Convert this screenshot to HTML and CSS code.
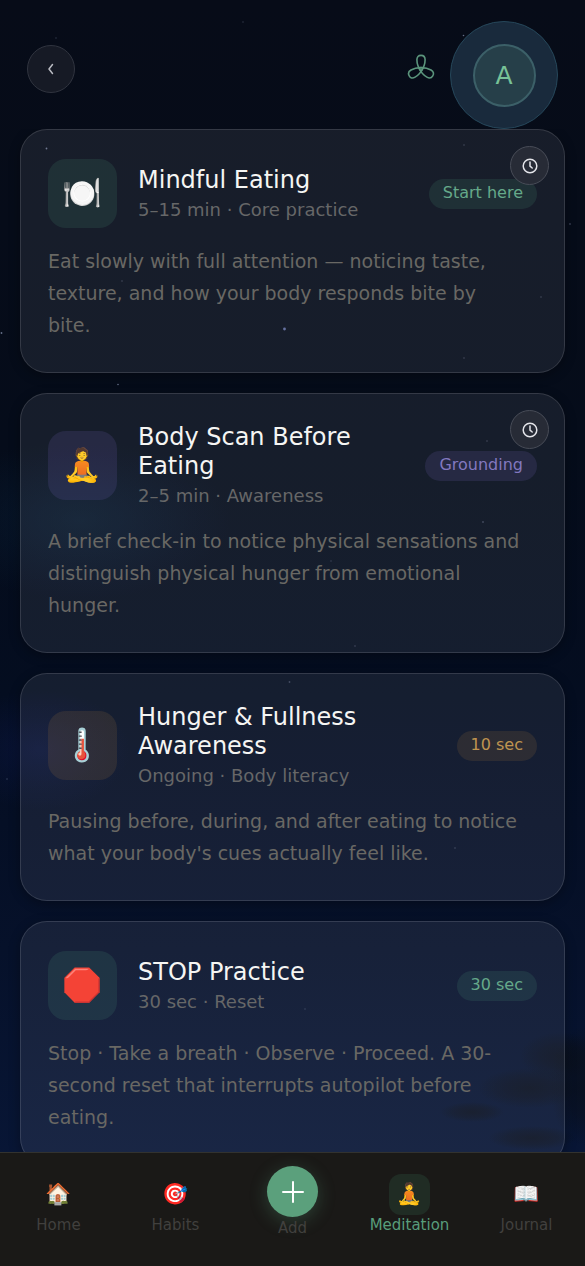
FILE: index.html
```html
<!DOCTYPE html>
<html lang="en">
<head>
<meta charset="utf-8">
<meta name="viewport" content="width=device-width, initial-scale=1">
<title>Mindful eating practices</title>
<link rel="stylesheet" href="styles.css">
</head>
<body>
<div class="app">
  <svg class="sky" viewBox="0 0 585 1266" preserveAspectRatio="xMidYMid slice" aria-hidden="true">
    <defs>
      <radialGradient id="teal"><stop offset="0" stop-color="#0c2a45" stop-opacity=".4"/><stop offset="1" stop-color="#0c2a45" stop-opacity="0"/></radialGradient>
      <radialGradient id="indigo"><stop offset="0" stop-color="#101c5a" stop-opacity=".35"/><stop offset="1" stop-color="#101c5a" stop-opacity="0"/></radialGradient>
      <radialGradient id="cloud"><stop offset="0" stop-color="#090f1a" stop-opacity=".75"/><stop offset=".5" stop-color="#090f1a" stop-opacity=".5"/><stop offset="1" stop-color="#090f1a" stop-opacity="0"/></radialGradient>
    </defs>
    <ellipse cx="80" cy="520" rx="150" ry="80" fill="url(#teal)"/>
    <ellipse cx="40" cy="750" rx="90" ry="60" fill="url(#indigo)"/>
    <g fill="url(#cloud)">
      <ellipse cx="560" cy="1056" rx="40" ry="24"/>
      <ellipse cx="530" cy="1088" rx="52" ry="20"/>
      <ellipse cx="584" cy="1086" rx="34" ry="60"/>
      <ellipse cx="472" cy="1112" rx="32" ry="10"/>
      <ellipse cx="532" cy="1138" rx="44" ry="12"/>
    </g>
    <g fill="#8f9ab8" opacity=".7">
      <circle cx="284.500" cy="329" r="1.400" fill="#7f8ed0"/>
      <circle cx="46.500" cy="148.500" r=".9"/><circle cx="1.500" cy="333" r=".9"/>
      <circle cx="118" cy="384.500" r=".8"/><circle cx="463.500" cy="35.500" r=".8"/>
      <g opacity=".5">
        <circle cx="464" cy="145" r=".8"/><circle cx="570" cy="224" r=".9"/><circle cx="541" cy="297" r=".8"/>
        <circle cx="464" cy="358" r=".8"/><circle cx="122" cy="281" r=".8"/><circle cx="243" cy="22" r=".7"/>
        <circle cx="487" cy="441" r=".8"/><circle cx="483" cy="522" r=".9"/><circle cx="331" cy="561" r=".7"/>
        <circle cx="355" cy="646" r=".8"/><circle cx="289.500" cy="682" r=".9"/><circle cx="455" cy="848" r=".8"/>
        <circle cx="7" cy="779" r=".8"/><circle cx="56" cy="38" r=".7"/><circle cx="305" cy="1009" r=".7"/>
      </g>
    </g>
  </svg>

  <header class="topbar">
    <button class="back" aria-label="Back">
      <svg width="8" height="12" viewBox="0 0 8 12"><path d="M5.500 1.500 2 6l3.500 4.500"/></svg>
    </button>
    <div class="account">
      <button class="flower" aria-label="Breathe">
        <svg width="28" height="28" viewBox="0 0 28 28">
          <path id="petal" d="M14 17.500C11.500 14 9.900 9.500 9.900 5.800 9.900 2.700 11.400 1.400 14 1.400s4.100 1.300 4.100 4.400C18.100 9.500 16.500 14 14 17.500z"/>
          <use href="#petal" transform="rotate(120 14 15)"/>
          <use href="#petal" transform="rotate(240 14 15)"/>
        </svg>
      </button>
      <button class="avatar" aria-label="Account"><span class="avatar-letter">A</span></button>
    </div>
  </header>

  <main class="practices">
    <article class="card">
      <button class="remind" aria-label="Remind me about Mindful Eating"><svg width="16" height="16" viewBox="0 0 16 16"><circle cx="8" cy="8" r="6.800"/><path d="M8 4v4.200l2.200 1.800"/></svg></button>
      <div class="card-head">
        <span class="tile green">🍽️</span>
        <div class="heading"><h2>Mindful Eating</h2><p class="meta">5–15 min · Core practice</p></div>
        <span class="tag green">Start here</span>
      </div>
      <p class="text">Eat slowly with full attention — noticing taste, texture, and how your body responds bite by bite.</p>
    </article>

    <article class="card">
      <button class="remind" aria-label="Remind me about Body Scan"><svg width="16" height="16" viewBox="0 0 16 16"><circle cx="8" cy="8" r="6.800"/><path d="M8 4v4.200l2.200 1.800"/></svg></button>
      <div class="card-head">
        <span class="tile purple">🧘</span>
        <div class="heading"><h2>Body Scan Before Eating</h2><p class="meta">2–5 min · Awareness</p></div>
        <span class="tag purple">Grounding</span>
      </div>
      <p class="text">A brief check-in to notice physical sensations and distinguish physical hunger from emotional hunger.</p>
    </article>

    <article class="card">
      <div class="card-head">
        <span class="tile amber">🌡️</span>
        <div class="heading"><h2>Hunger &amp; Fullness Awareness</h2><p class="meta">Ongoing · Body literacy</p></div>
        <span class="tag amber">10 sec</span>
      </div>
      <p class="text">Pausing before, during, and after eating to notice what your body's cues actually feel like.</p>
    </article>

    <article class="card">
      <div class="card-head">
        <span class="tile green">🛑</span>
        <div class="heading"><h2>STOP Practice</h2><p class="meta">30 sec · Reset</p></div>
        <span class="tag green">30 sec</span>
      </div>
      <p class="text">Stop · Take a breath · Observe · Proceed. A 30-second reset that interrupts autopilot before eating.</p>
    </article>
  </main>

  <nav class="tabs">
    <a class="tab" href="#home"><span class="tab-icon">🏠</span>Home</a>
    <a class="tab" href="#habits"><span class="tab-icon">🎯</span>Habits</a>
    <a class="tab add" href="#add"><span class="add-icon"><svg width="22" height="22" viewBox="0 0 22 22"><path d="M11 1v20M1 11h20"/></svg></span>Add</a>
    <a class="tab active" href="#meditation" aria-current="page"><span class="tab-icon">🧘</span>Meditation</a>
    <a class="tab" href="#journal"><span class="tab-icon">📖</span>Journal</a>
  </nav>
</div>
</body>
</html>
```

FILE: styles.css
```css
* { box-sizing: border-box; }

body {
  margin: 0;
  background: #060c18;
  color: #f5f5f3;
  font-family: "DejaVu Sans", "Noto Color Emoji", sans-serif;
}

h2, p { margin: 0; font-weight: 400; }

button {
  padding: 0;
  border: 0;
  background: none;
  color: inherit;
  font: inherit;
}

svg { display: block; fill: none; stroke-linecap: round; stroke-linejoin: round; }

.app {
  position: relative;
  display: flex;
  flex-direction: column;
  height: 100vh;
  background: linear-gradient(#070c18 0%, #050c1a 35%, #040d20 55%, #06112a 75%, #081636 92%);
}

.sky { position: absolute; inset: 0; width: 100%; height: 100%; }

.topbar {
  position: relative;
  display: flex;
  align-items: center;
  justify-content: space-between;
  padding: 21px 27px 0;
}

.back {
  display: grid;
  place-items: center;
  width: 48px;
  height: 48px;
  margin-bottom: 12px;
  border: 1px solid #30343f;
  border-radius: 50%;
  background: #161a25;
}
.back svg { stroke: #b9bbc2; stroke-width: 1.5; }

.account { display: flex; align-items: center; gap: 15px; }
.flower { margin-bottom: 14px; }
.flower svg { stroke: #5b957c; stroke-width: 1.6; }

.avatar {
  display: grid;
  place-items: center;
  width: 108px;
  height: 108px;
  border: 1px solid #26475a;
  border-radius: 50%;
  background: #192a3c;
}
.avatar-letter {
  display: grid;
  place-items: center;
  width: 63px;
  height: 63px;
  border: 2px solid #3c6068;
  border-radius: 50%;
  background: #263f49;
  color: #78c297;
  font-size: 25px;
}

.practices {
  position: relative;
  display: flex;
  flex: 1;
  flex-direction: column;
  gap: 20px;
  min-height: 0;
  padding: 0 20px 20px;
  overflow-y: auto;
  scrollbar-width: none;
}

.card {
  position: relative;
  flex: none;
  padding: 29px 27px 31px;
  border: 1px solid rgba(255, 255, 255, .13);
  border-radius: 27px;
  background: rgba(245, 240, 255, .075);
  box-shadow: 0 3px 12px rgba(0, 0, 0, .3);
}

.card-head { display: flex; align-items: center; gap: 21px; margin-bottom: 17px; }

.tile {
  display: grid;
  flex: none;
  place-items: center;
  width: 69px;
  height: 69px;
  padding-bottom: 2px;
  border-radius: 18px;
  font-size: 32px;
  line-height: 40px;
}
.tile.green, .tag.green { background: rgba(82, 160, 125, .15); }
.tile.purple, .tag.purple { background: rgba(120, 100, 190, .17); }
.tile.amber, .tag.amber { background: rgba(180, 130, 60, .15); }

.heading { flex: 1; min-width: 0; }
.heading h2 { font-size: 24px; line-height: 29px; }
.meta { margin-top: 3px; color: #666768; font-size: 18px; line-height: 24px; }
.text {
  padding-right: 13px;
  color: #696864;
  font-size: 19px;
  line-height: 32px;
}

.tag {
  flex: none;
  padding: 0 14px 2px;
  border-radius: 15px;
  font-size: 16px;
  line-height: 28px;
}
.tag.green { color: #65a98a; }
.tag.purple { color: #8278bf; }
.tag.amber { color: #bf9450; }

.remind {
  position: absolute;
  z-index: 1;
  top: 16px;
  right: 15px;
  display: grid;
  place-items: center;
  width: 39px;
  height: 39px;
  border: 1px solid #484c57;
  border-radius: 50%;
  background: #272b36;
}
.remind svg { stroke: #e4e5ea; stroke-width: 1.5; }

.tabs {
  position: relative;
  display: grid;
  grid-template-columns: repeat(5, 1fr);
  height: 114px;
  border-top: 1px solid #32322f;
  background: #1a1917;
}

.tab {
  display: flex;
  flex-direction: column;
  align-items: center;
  padding-top: 21px;
  color: #41403e;
  font-size: 15px;
  line-height: 20px;
  text-decoration: none;
}
.tab-icon {
  display: grid;
  place-items: center;
  width: 41px;
  height: 41px;
  padding-bottom: 2px;
  border-radius: 12px;
  font-size: 21px;
}
.tab.active { color: #589d7b; }
.tab.active .tab-icon { background: #202c24; }

.tab.add { gap: 1px; padding-top: 13px; }
.add-icon {
  display: grid;
  place-items: center;
  width: 51px;
  height: 51px;
  border-radius: 50%;
  background: #5ba07c;
  box-shadow: 0 4px 18px rgba(91, 160, 124, .3);
}
.add-icon svg { stroke: #fff; stroke-width: 2; }
```
